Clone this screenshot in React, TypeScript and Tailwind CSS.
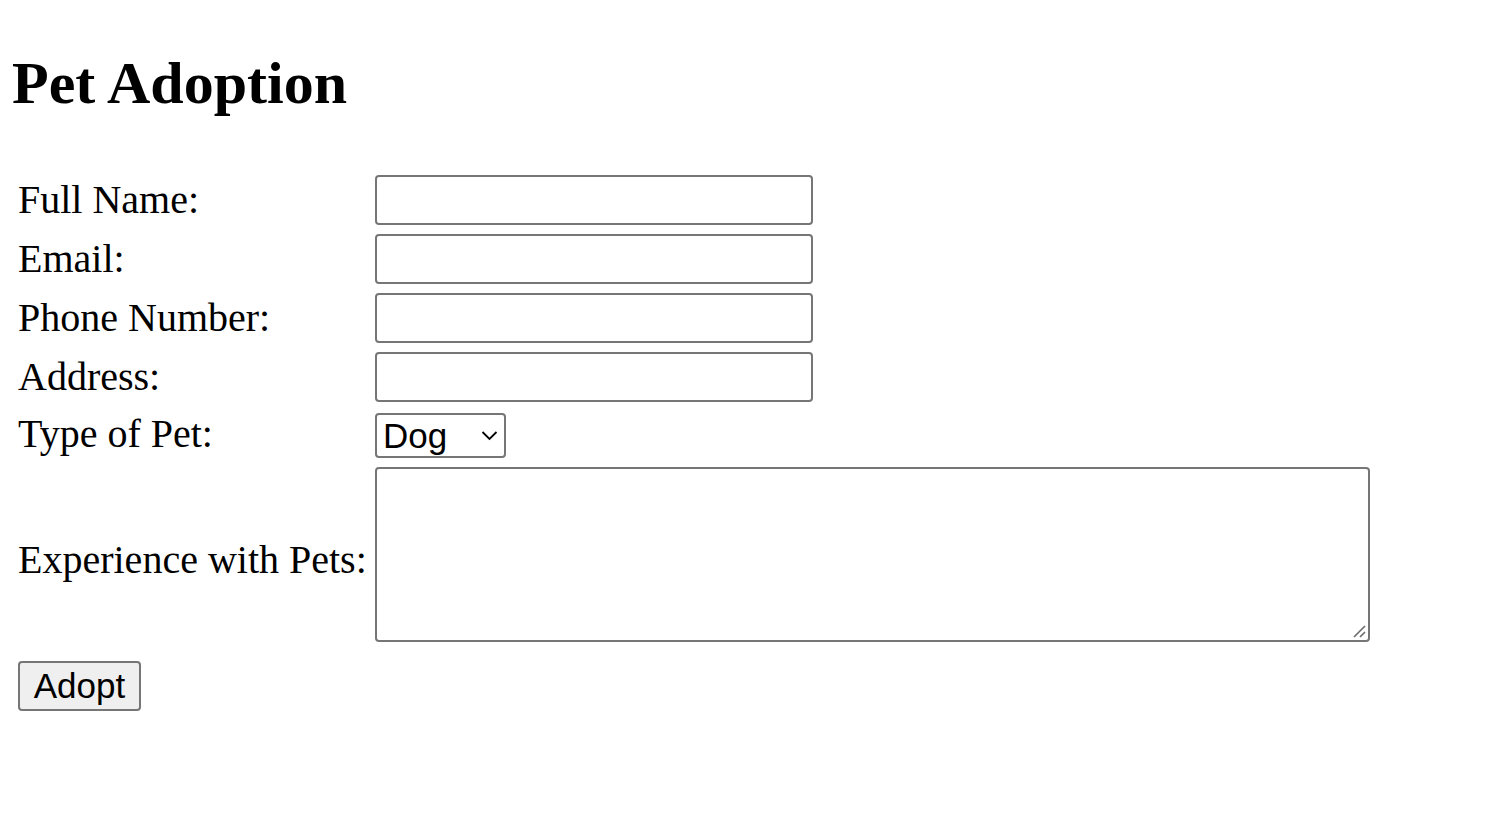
import React from "react";

const serif = { fontFamily: '"Liberation Serif", "Times New Roman", serif' };

function Row({ label, children, className = "" }: { label: string; children: React.ReactNode; className?: string }) {
  return (
    <div className={"flex items-center " + className}>
      <label className="w-[357px] shrink-0 text-[40px] leading-[46px] text-black whitespace-nowrap" style={serif}>
        {label}
      </label>
      {children}
    </div>
  );
}

const inputCls =
  "block w-[438px] h-[50px] border-2 border-[#767676] rounded-[4px] bg-white px-[4px] text-[33px] text-black outline-none font-['Liberation_Sans',Arial,sans-serif]";

export default function App() {
  return (
    <div className="min-h-[825px] w-full bg-white pt-[49px] pl-[12px] text-black">
      <h1 className="m-0 text-[60px] leading-[69px] font-bold" style={serif}>
        Pet Adoption
      </h1>
      <form className="ml-[6px] mt-[57px]" onSubmit={(e) => e.preventDefault()}>
        <Row label="Full Name:">
          <input type="text" className={inputCls} />
        </Row>
        <Row label="Email:" className="mt-[9px]">
          <input type="email" className={inputCls} />
        </Row>
        <Row label="Phone Number:" className="mt-[9px]">
          <input type="tel" className={inputCls} />
        </Row>
        <Row label="Address:" className="mt-[9px]">
          <input type="text" className={inputCls} />
        </Row>
        <div className="mt-[9px] flex items-start h-[46px]">
          <label className="w-[357px] shrink-0 text-[40px] leading-[46px] whitespace-nowrap" style={serif}>
            Type of Pet:
          </label>
          <div className="relative mt-[2px] w-[131px] h-[45px]">
            <select
              defaultValue="Dog"
              className="appearance-none block w-[131px] h-[45px] border-2 border-[#767676] rounded-[4px] bg-white pl-[6px] pr-[30px] text-[35px] leading-[40px] text-black outline-none font-['Liberation_Sans',Arial,sans-serif]"
            >
              <option>Dog</option>
              <option>Cat</option>
              <option>Bird</option>
              <option>Other</option>
            </select>
            <svg
              className="pointer-events-none absolute left-[106px] top-[17px]"
              width="17"
              height="11"
              viewBox="0 0 17 11"
              fill="none"
            >
              <path d="M1.5 2 L8.5 9 L15.5 2" stroke="#000" strokeWidth="1.8" />
            </svg>
          </div>
        </div>
        <div className="mt-[10px] flex items-start">
          <label className="w-[357px] shrink-0 mt-[70px] text-[40px] leading-[46px] whitespace-nowrap" style={serif}>
            Experience with Pets:
          </label>
          <div className="relative">
            <textarea className="block resize-none w-[995px] h-[175px] border-2 border-[#767676] rounded-[4px] bg-white p-[4px] text-[33px] text-black outline-none font-['Liberation_Mono',monospace]" />
            <svg
              className="pointer-events-none absolute right-[4px] bottom-[4px]"
              width="14"
              height="14"
              viewBox="0 0 14 14"
              fill="none"
            >
              <path d="M2 13 L13 2 M8 13 L13 8" stroke="#6b6b6b" strokeWidth="1.6" />
            </svg>
          </div>
        </div>
        <button
          type="submit"
          className="mt-[19px] block w-[123px] h-[50px] border-2 border-[#767676] rounded-[4px] bg-[#efefef] text-[35px] leading-[40px] text-black font-['Liberation_Sans',Arial,sans-serif]"
        >
          Adopt
        </button>
      </form>
    </div>
  );
}
